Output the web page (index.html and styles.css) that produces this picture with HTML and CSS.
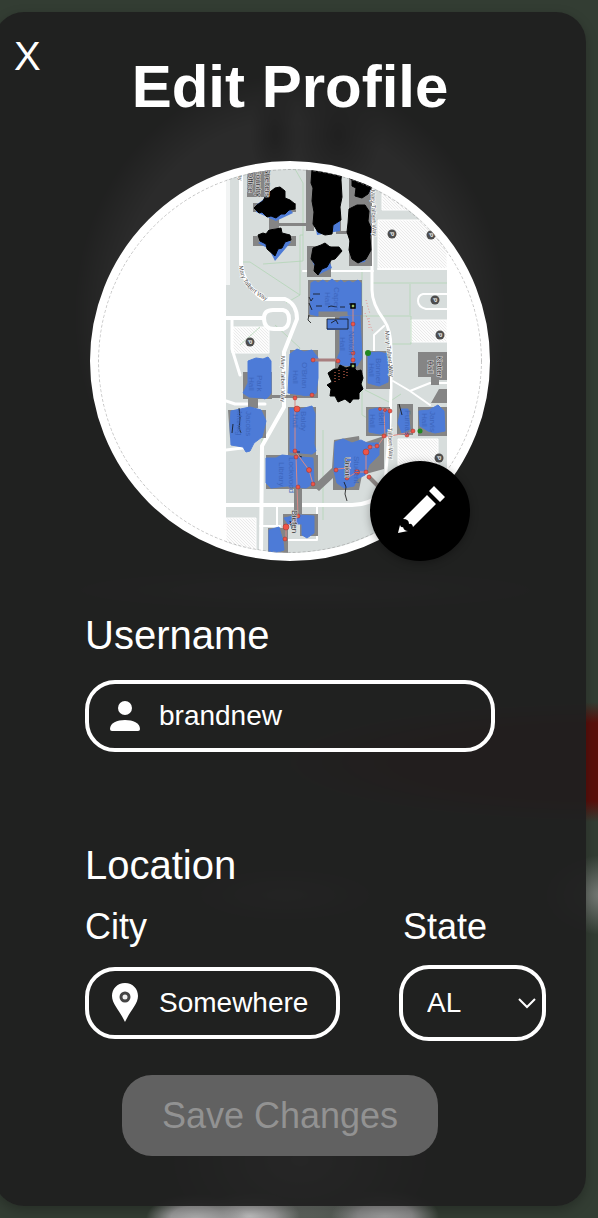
FILE: index.html
```html
<!DOCTYPE html>
<html lang="en">
<head>
<meta charset="utf-8">
<meta name="viewport" content="width=device-width, initial-scale=1">
<title>Edit Profile</title>
<link rel="stylesheet" href="styles.css">
</head>
<body>
<main class="page">
<section class="card">
  <header class="card-header">
    <button class="close" type="button" aria-label="Close">X</button>
    <h1 class="title">Edit Profile</h1>
  </header>

  <div class="avatar">
    <svg class="avatar-map" viewBox="98 169 384 384" role="img" aria-label="Campus map">
      <defs>
        <clipPath id="round"><circle cx="290" cy="361" r="192"/></clipPath>
        <clipPath id="sheet"><rect x="226" y="169" width="221" height="384"/></clipPath>
        <pattern id="hatch" width="3" height="3" patternUnits="userSpaceOnUse"><rect width="3" height="3" fill="#fcfcfc"/><path d="M0 0L3 3" stroke="#dedede" stroke-width=".6"/></pattern>
      </defs>
      <g clip-path="url(#round)">
        <rect x="98" y="169" width="384" height="384" fill="#fff"/>
        <g clip-path="url(#sheet)">
          <rect x="226" y="169" width="221" height="384" fill="#d7dddc"/>
          <path d="M226 169h4V285h-4z" fill="#f2f4f4"/>
          <g fill="url(#hatch)" stroke="#fff">
            <path d="M382 192h65v18h-65z"/><path d="M378 220h69v49h-69z"/><path d="M232 327h37v26h-37z"/>
            <path d="M411 320h36v22h-36z"/><path d="M398 439h40v26h-40z"/><path d="M226 518h30v36h-30z"/>
          </g>
          <g fill="none" stroke="#aed4b0" stroke-width=".7">
            <path d="M295 169l8 14v78l-40 3M243 262l7 0 50 33-14 8M303 235h-3v60M323 430v90M362 269v146l30 17M362 316h49v28h-20M372 283h75M410 284v31M365 390l24 12 12-8M240 345l20-18M262 454l0-20M340 286l-20-5M275 325l25 23-10 18"/>
          </g>
          <g fill="none" stroke="#fff" stroke-linecap="round" stroke-linejoin="round">
            <path stroke-width="4" d="M241 169V264q2 20 22 35h22q12 5 12 20l-13 33v55l-22 39-1 108M226 318h38q0-8 9-8h10q6 1 6 9t-6 10h-9q-10 0-10-11M226 505h126q18 0 32-13"/>
            <path stroke-width="3" d="M232 319v30l8 26M226 401l9 3h30M226 450l24-3M372 182v108q0 14 12 30 7 10 7 28v40l-1 35-5 60"/>
            <path stroke-width="2" d="M303 271h70M378 269h69M384 326l-10 9v18M393 381l17 10 20-8h17M410 391l20 14M277 507v18M260 526h20M317 505v35h-33M447 294h-24q-5 1-5 7t8 8h21"/>
          </g>
          <g fill="#858585">
            <path d="M247 169h23v28h-23zM253 203h43v9h-43zM269 217h10v12h-10zM253 236h43v10h-43zM279 223h30v3h-30zM306 169h8v62h-8zM336 212h5v22h-5zM349 175h23v91h-23zM341 231h10v3h-10zM307 246h24v31h-24zM308 280h54v37h-54zM335 306h28v68h-28zM270 395h20v3h-20zM243 372h29v27h-29zM248 394h10v14h-10zM290 350h28v48h-28zM288 407h28v50h-28zM266 455h52v34h-52zM366 351h24v38h-24zM366 407h24v29h-24zM397 404h16v31h-16zM418 407h29v29h-29zM418 352h29v28h-8v5h-8v-8h-13z"/>
            <path d="M447 389l-8 0-8 14h16zM334 440l25-4 1 8 24-8v33l-22 6-3 15h-26v-12l-14 13-6-5 19-18zM228 410h38v28h-36zM294 488h8v29h-8zM283 514h35v22h-18v-12h-12v30h-20v-26h15z"/>
          </g>
          <g fill="#4d7bd7" stroke="#4d7bd7" stroke-linejoin="round">
            <path d="M311 283l4-2 3 2 5-3 4 3 5-4 5 4 4-3 3 3 5-2 4 2 5-3 3 3v32h-13v-4h-30v5l-8-2zM340 317l20-1 2 42-5 8-16-1-5-4 4-9zM248 361l8-3 7 1 5-2 3 4 0 32q-5 8-8 5l-14-1-6-4 5-10zM290 354l7-5 7 3 8-2 6 8v20l-2 15q-9 4-14 2l-14-2zM231 411l19-4 11 3 5 11-4 16-8 6-4 8-4 1-3-5-12-2-1-20zM290 408l11 1 11-3 3 8-1 30 2 7-4 3-22-2 0-18zM266 458l10 0 6-3 18 2 13 1 1 25-8 5-19-2-16 2-5-5zM335 442l8-3 9 4 9-3 6 3 12 0v12l-10 10-4 10-8 4-3 7-10 2-7-5-3-12zM368 353l11-1 9 2v28l-9 4-11-3zM369 410l9-2 11 3v20l-9 3-11-2zM401 409l7 0 2 20-8 4-4-10zM419 411l10-1 9-5 6 6 1 20-10 2-7-2-8-5zM284 518l14-3 16 1v17l-7 5-5-3v-11h-14zM269 530l10-3 4 14 1 9-15 5z"/>
            <path d="M256 205l20-15 17 23-17 8-20-9zM258 243l18-10 15 9-16 19-6-12zM314 219l26-4 0 16-23 4zM311 258l17 0 4 10-14 7zM365 233l5 9-5 20-7 1z" stroke="none"/>
          </g>
          <path d="M327 319h21v11h-21z" fill="#4d7bd7"/>
          <g fill="#000" stroke="#000" stroke-linejoin="round">
            <path d="M275 188l5-1 5 4 0 7 5 2 5 4 0 5-6 1-4 4-4 0-5 4-5-2-4 1-5-5-3 1-5-5 3-3 6-4 3-6zM276 229l5-1 1 5 8 2 1 5-6 2-3 6-4 1-3 7-8-7-1-5-6-3-2-6 5-2 3 1 3-4zM312 169h30l-1 11 1 17-2 10 1 13-8 5-1 9-7 1-7-3-5-8 1-12-2-11 1-13-2-5zM348 177l4 3 0 6 4 2-1 8 7 2 6-4 4-8V169h-24zM349 209l8-4 8 0 4 6-1 10 3 7-1 9 1 13-5 9-8 4-6-4-3-9 1-9-3-9 1-9zM313 248l8-3 4-2 5 4 9 0 3 4-7 8-4 1-4 7-5 2-4 6-4-4 1-7-4-5zM328 373l6-4 4 0 2-4 6 3 6-2 5 5 4-1 2 8-2 6 2 5-4 4 0 6-6 0-3 4-5-4-7 3-3-6-5 0 1-7-4-4 5-3z"/>
          </g>
          <g fill="none" stroke="#111" stroke-width=".8">
            <path d="M309 297l2 4 2-3M309 315l-1 5 3 3M309 303l3 7M313 294h7M316 306l6 0M328 307l3-1 6 1M340 307h5M327 319h21v10h-21zM331 323l5-3 2 4M239 408l1 10-1 10 2 5M233 424l-1 9M344 482l2 5-1 7 2 7M399 404l3 11M295 452h5M299 456l3 1M349 304l6 0M290 521l2 8"/>
          </g>
          <path d="M335 372v12M339 370v12M344 371v9M347 369v7" stroke="#ed765a" fill="none" stroke-dasharray="1 2"/>
          <path d="M313 360h25" stroke="#a87f7f" stroke-width="3"/>
          <path d="M353 306v60M295 395v56l14 19 4 14M296 456l2 60-12 12v11M337 469l10-1 0 10 10-6 9 0M366 470v-19l4-4h7l7-10 29-5M384 411l1 25M378 409h12" stroke="#d98986" stroke-width="1" fill="none"/>
          <path d="M366 300l4 14M365 313l8 19M369 318v12" stroke="#e58f8f" stroke-dasharray="1 2" fill="none"/>
          <path d="M368 476l18 18" stroke="#898381" stroke-width="4" fill="none"/>
          <g fill="#ef5547" stroke="#9c302b" stroke-width=".5">
            <circle cx="313" cy="360" r="2"/><circle cx="338" cy="361" r="2"/><circle cx="353" cy="324" r="2"/><circle cx="353" cy="353" r="2"/><circle cx="353" cy="360" r="2"/><circle cx="295" cy="398" r="2"/><circle cx="312" cy="395" r="2"/><circle cx="297" cy="409" r="3"/><circle cx="295" cy="451" r="2"/><circle cx="296" cy="457" r="2"/><circle cx="309" cy="470" r="2.5"/><circle cx="313" cy="484" r="2"/><circle cx="298" cy="487" r="2"/><circle cx="298" cy="516" r="2"/><circle cx="286" cy="527" r="3"/><circle cx="285" cy="539" r="2"/><circle cx="336" cy="470" r="2"/><circle cx="347" cy="468" r="2"/><circle cx="347" cy="478" r="2"/><circle cx="357" cy="472" r="2.5"/><circle cx="366" cy="452" r="3"/><circle cx="366" cy="472" r="2"/><circle cx="369" cy="477" r="2"/><circle cx="370" cy="447" r="2"/><circle cx="377" cy="446" r="2"/><circle cx="384" cy="436" r="2"/><circle cx="390" cy="435" r="2"/><circle cx="385" cy="410" r="1.5"/><circle cx="390" cy="411" r="2"/><circle cx="380" cy="409" r="1.5"/><circle cx="407" cy="435" r="2"/><circle cx="413" cy="431" r="2"/>
          </g>
          <g fill="#282"><circle cx="368" cy="353" r="3"/><circle cx="420" cy="431" r="2.5"/></g>
          <g fill="#9b6" stroke="#000" stroke-width="1.5"><path d="M351 304h4v4h-4zM351 364h4v4h-4z"/></g>
          <g class="map-parking">
            <circle cx="392" cy="234" r="4.5"/><circle cx="431" cy="235" r="4.5"/><circle cx="435" cy="300" r="4.5"/><circle cx="440" cy="335" r="4.5"/><circle cx="250" cy="342" r="4.5"/><circle cx="439" cy="458" r="4.5"/>
            <text transform="translate(390 232) rotate(90)">P</text><text transform="translate(429 233) rotate(90)">P</text><text transform="translate(433 298) rotate(90)">P</text><text transform="translate(438 333) rotate(90)">P</text><text transform="translate(248 340) rotate(90)">P</text><text transform="translate(437 456) rotate(90)">P</text>
          </g>
          <g class="map-road">
            <path id="bend" d="M239 266q2 26 36 38" fill="none" stroke="none"/>
            <text><textPath href="#bend">Mary Talbert Way</textPath></text>
            <text transform="translate(281 356) rotate(90)">Mary Talbert Way</text>
            <text transform="translate(385 331) rotate(84)">Mary Talbert Way</text>
            <text transform="translate(388 428) rotate(88)">Talbert Way</text>
            <text transform="translate(371 190) rotate(88)">Mary Talbert Way</text>
            <text transform="translate(238 169) rotate(88)">Way</text>
          </g>
          <g class="map-hall">
            <text transform="translate(437 356) rotate(90)">Ketter</text><text transform="translate(428 360) rotate(90)">Hall</text>
            <text transform="translate(265 168) rotate(90)">Shelters</text><text transform="translate(256 169) rotate(90)">Country</text><text transform="translate(248 172) rotate(90)">Office</text>
            <text transform="translate(345 457) rotate(90)">Union</text><text transform="translate(292 510) rotate(90)">Diefen</text>
          </g>
          <g class="map-faint">
            <text transform="translate(334 287) rotate(90)">Capen</text><text transform="translate(325 292) rotate(90)">Hall</text><text transform="translate(349 331) rotate(90)">Norton</text><text transform="translate(340 337) rotate(90)">Hall</text>
            <text transform="translate(257 375) rotate(90)">Park</text><text transform="translate(249 377) rotate(90)">Hall</text><text transform="translate(302 362) rotate(90)">O'Brian</text><text transform="translate(293 370) rotate(90)">Hall</text>
            <text transform="translate(246 411) rotate(90)">Jacobs</text><text transform="translate(237 411) rotate(90)">Manag</text><text transform="translate(301 411) rotate(90)">Baldy</text><text transform="translate(293 414) rotate(90)">Hall</text>
            <text transform="translate(279 462) rotate(90)">Library</text><text transform="translate(289 457) rotate(90)">Lockwood</text><text transform="translate(376 358) rotate(90)">Bonner</text><text transform="translate(369 363) rotate(90)">Hall</text>
            <text transform="translate(379 412) rotate(90)">Bell</text><text transform="translate(370 414) rotate(90)">Hall</text><text transform="translate(405 410) rotate(90)">Furnas</text><text transform="translate(430 411) rotate(90)">Jarvis</text><text transform="translate(422 413) rotate(90)">Hall</text><text transform="translate(354 456) rotate(90)">Student</text>
          </g>
        </g>
        <circle cx="290" cy="361" r="191.5" fill="none" stroke="#999" stroke-width=".6" stroke-dasharray="3 2"/>
      </g>
    </svg>
    <button class="edit" type="button" aria-label="Change picture">
      <svg class="edit-icon" viewBox="370 461 100 100" aria-hidden="true" fill="#fff">
        <path d="M434 486l11 11-5 5-11-11zM427 495l9 9-23 23q-1-4-4-3 0-5-6-5zM400 525q1 3 3 2 1 4 5 4l-10 2z"/>
      </svg>
    </button>
  </div>

  <form class="form">
    <label class="label" for="username">Username</label>
    <div class="field field-name">
      <svg class="field-icon" viewBox="0 0 40 40" aria-hidden="true" fill="#fff"><circle cx="20" cy="12" r="7"/><path d="M5 33c0-6 7-9 15-9s15 3 15 9q0 2-2 2H7q-2 0-2-2z"/></svg>
      <input class="input" id="username" type="text" value="brandnew">
    </div>
    <h2 class="label location">Location</h2>
    <div class="place">
      <label class="sublabel" for="city">City</label>
      <label class="sublabel sublabel-state" for="state">State</label>
      <div class="field">
        <svg class="field-icon" viewBox="0 0 40 40" aria-hidden="true"><path d="M20 0C12 0 7 6 7 13c0 8 8 15 13 26 5-11 13-18 13-26C33 6 28 0 20 0z" fill="#fff"/><circle cx="20" cy="14" r="4" fill="#eee" stroke="#444" stroke-width="3"/></svg>
        <input class="input" id="city" type="text" value="Somewhere">
      </div>
      <div class="select-wrap">
        <select class="select" id="state"><option>AL</option><option>AK</option><option>AZ</option><option>NY</option></select>
        <svg class="chevron" viewBox="0 0 18 12" aria-hidden="true"><path d="M1 1l8 8 8-8" fill="none" stroke="#fff" stroke-width="2"/></svg>
      </div>
    </div>
    <div class="actions"><button class="save" type="submit" disabled>Save Changes</button></div>
  </form>
</section>
</main>
</body>
</html>
```
FILE: styles.css
```css
* { box-sizing: border-box; }

body {
  margin: 0;
  background: #333d33;
  color: #fff;
  font-family: "Liberation Sans", Arial, sans-serif;
}

.page {
  overflow: hidden;
  padding: 12px 12px 12px 0;
  background:
    radial-gradient(ellipse 26px 50px at 275px 135px, #333 0, transparent 100%),
    radial-gradient(ellipse 45px 60px at 338px 135px, #222 0, transparent 100%),
    radial-gradient(ellipse 215px 240px at 290px 315px, #fff 0, #fff 80%, transparent 100%),
    radial-gradient(ellipse 330px 60px at 610px 762px, #590f0b 0, #590f0b 65%, transparent 100%),
    radial-gradient(ellipse 60px 40px at 604px 895px, #777b77 0, transparent 100%),
    radial-gradient(ellipse 90px 26px at 285px 895px, #666 0, transparent 100%),
    radial-gradient(ellipse 240px 20px at 305px 590px, #666 0, transparent 100%),
    radial-gradient(ellipse 50px 24px at 196px 1218px, #aaa 0, #999 50%, transparent 100%),
    radial-gradient(ellipse 50px 24px at 250px 1216px, #bbb 0, #999 50%, transparent 100%),
    radial-gradient(ellipse 54px 26px at 385px 1216px, #999 0, #888 50%, transparent 100%),
    radial-gradient(ellipse 130px 90px at 300px 1160px, #999 0, transparent 100%),
    #333d33;
}

.card {
  margin-left: -6px;
  padding: 21px 0 50px;
  border-radius: 30px;
  background: rgba(32, 32, 32, 0.95);
  box-shadow: 0 4px 12px rgba(0, 0, 0, 0.25);
}

.card-header {
  display: grid;
  grid-template-columns: 1fr auto 1fr;
  align-items: start;
}

.close {
  justify-self: start;
  margin: 0 0 0 20px;
  padding: 0;
  border: 0;
  background: none;
  color: #fff;
  font: 40px/46px "Liberation Sans", Arial, sans-serif;
}

.title {
  margin: 20px 0 0;
  font-size: 60px;
  line-height: 68px;
}

.avatar {
  position: relative;
  width: 400px;
  margin: 40px auto 0;
  border: 8px solid #fff;
  border-radius: 50%;
  background: #fff;
}

.avatar-map { display: block; width: 100%; }

.map-parking circle { fill: #4d4d4d; }
.map-parking text { fill: #fff; font-size: 6px; font-weight: bold; }
.map-road text { fill: #555; stroke: #fff; stroke-width: 1px; paint-order: stroke; font-size: 6px; }
.map-hall text { fill: #333; stroke: #ddd; stroke-width: 1px; paint-order: stroke; font-size: 8px; }
.map-faint text { fill: #3d66bd; font-size: 8px; }

.edit {
  position: absolute;
  right: 12px;
  bottom: -8px;
  width: 100px;
  height: 100px;
  padding: 0;
  border: 0;
  border-radius: 50%;
  background: #000;
  box-shadow: 0 2px 8px rgba(0, 0, 0, 0.3);
}

.edit-icon { display: block; width: 100%; }

.form {
  padding: 0 40px 0 91px;
  margin-top: 51px;
}

.label {
  display: block;
  margin: 0;
  font-size: 40px;
  font-weight: normal;
  line-height: 46px;
}

.location { margin-top: 90px; }

.field {
  display: flex;
  align-items: center;
  height: 72px;
  padding: 0 16px;
  border: 4px solid #fff;
  border-radius: 30px;
}

.field-name { max-width: 410px; margin-top: 22px; }

.field-icon { flex: none; width: 40px; height: 40px; }

.input {
  flex: 1;
  min-width: 0;
  margin-left: 14px;
  padding: 0;
  border: 0;
  outline: 0;
  background: none;
  color: #fff;
  font: 28px/32px "Liberation Sans", Arial, sans-serif;
}

.place {
  display: grid;
  grid-template-columns: minmax(0, 1fr) 147px;
  align-items: center;
  gap: 18px 59px;
  margin-top: 18px;
}

.sublabel { font-size: 36px; line-height: 41px; }
.sublabel-state { padding-left: 4px; }

.select-wrap { position: relative; }

.select {
  display: block;
  width: 100%;
  height: 76px;
  padding: 0 24px;
  border: 4px solid #fff;
  border-radius: 30px;
  appearance: none;
  background: none;
  color: #fff;
  font: 28px/32px "Liberation Sans", Arial, sans-serif;
}

.select option { background: #222; }

.chevron {
  position: absolute;
  top: 33px;
  right: 10px;
  width: 18px;
  height: 12px;
  pointer-events: none;
}

.actions {
  display: flex;
  justify-content: center;
  margin: 34px 0 0 -71px;
}

.save {
  padding: 20px 40px;
  border: 0;
  border-radius: 30px;
  background: #616161;
  color: #929292;
  font: 36px/41px "Liberation Sans", Arial, sans-serif;
}
```
